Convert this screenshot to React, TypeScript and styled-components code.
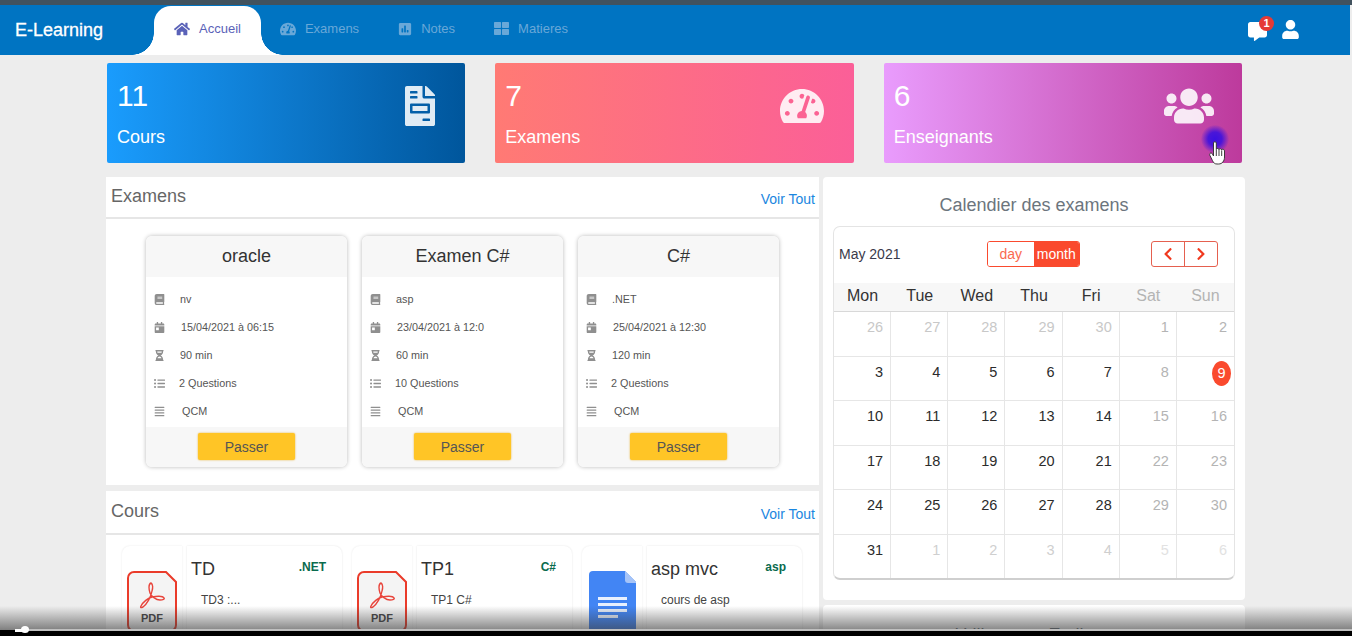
import { createGlobalStyle } from "styled-components";
import styled from "styled-components";
import type { ReactNode } from "react";
import {
  FaAlignJustify,
  FaBook,
  FaCalendarDay,
  FaCommentAlt,
  FaFileInvoice,
  FaHome,
  FaHourglassHalf,
  FaListUl,
  FaPoll,
  FaTachometerAlt,
  FaThLarge,
  FaUser,
  FaUsers,
  FaChevronLeft,
  FaChevronRight,
} from "react-icons/fa";

const exams = [
  { title: "oracle", subject: "nv", date: "15/04/2021 à 06:15", time: "90 min", questions: "2 Questions" },
  { title: "Examen C#", subject: "asp", date: "23/04/2021 à 12:0", time: "60 min", questions: "10 Questions" },
  { title: "C#", subject: ".NET", date: "25/04/2021 à 12:30", time: "120 min", questions: "2 Questions" },
];

const courses = [
  { title: "TD", tag: ".NET", text: "TD3 :...", kind: "pdf" },
  { title: "TP1", tag: "C#", text: "TP1 C#", kind: "pdf" },
  { title: "asp mvc", tag: "asp", text: "cours de asp", kind: "doc" },
];

const weekDays = ["Mon", "Tue", "Wed", "Thu", "Fri", "Sat", "Sun"];

const weeks = [
  [26, 27, 28, 29, 30, 1, 2],
  [3, 4, 5, 6, 7, 8, 9],
  [10, 11, 12, 13, 14, 15, 16],
  [17, 18, 19, 20, 21, 22, 23],
  [24, 25, 26, 27, 28, 29, 30],
  [31, 1, 2, 3, 4, 5, 6],
];

const dayTone = (week: number, col: number) => {
  if (week === 0 && col < 5) return "#c8c8c8";
  if (week === 5 && col > 0) return col > 4 ? "#e2e2e2" : "#cfcfcf";
  if (col > 4) return "#b4b4b4";
  return "#2b2b2b";
};

const PdfIcon = () => (
  <svg width="50" height="62" viewBox="0 0 50 62">
    <path
      d="M7 1H39L49 11V54a6 6 0 0 1-6 6H7a6 6 0 0 1-6-6V7a6 6 0 0 1 6-6Z"
      fill="#f4f4f4"
      stroke="#ea3b2a"
      strokeWidth="2"
    />
    <path
      d="M24 12c-3 1-2 7-1 10 1 3 6 7 10 7 3 0 5-1 4-2-1-2-7-2-12-1-4 1-9 5-11 9-1 2 0 2 2 1 4-3 8-10 9-16 1-3 1-7-1-8Z"
      fill="none"
      stroke="#e8453c"
      strokeWidth="1.400"
    />
    <text x="25" y="51" textAnchor="middle" fontFamily="Liberation Sans, sans-serif" fontSize="11" fontWeight="700" fill="#444">
      PDF
    </text>
  </svg>
);

const DocIcon = () => (
  <svg width="47" height="64" viewBox="0 0 47 64">
    <path d="M4 0H36L47 11V60a4 4 0 0 1-4 4H4a4 4 0 0 1-4-4V4a4 4 0 0 1 4-4Z" fill="#4285f4" />
    <path d="M36 0L47 11V12H39a3 3 0 0 1-3-3Z" fill="#a6c4f8" />
    <path d="M9 26h29v3H9ZM9 32h29v3H9ZM9 38h29v3H9ZM9 44h20v3H9Z" fill="#e8f0fe" />
  </svg>
);

const Hand = () => (
  <svg width="18" height="24" viewBox="0 0 18 24">
    <path
      d="M4.500 2c0-1.700 2.800-1.700 2.800 0v6.500c0-1.400 2.700-1.400 2.700 0.200 0-1.400 2.600-1.300 2.600 0.400 0-1.300 2.900-1.100 2.900 0.800V16c0 4-2.300 7-5.800 7H8c-2.200 0-3.400-1-4.500-3.300L.8 14.200c-.8-2 1.600-3 2.600-1.300L4.500 15Z"
      fill="#fff"
      stroke="#2a2a2a"
      strokeWidth="0.900"
    />
    <path d="M7.300 9v6M10 9v6M12.700 9.500V15" stroke="#2a2a2a" strokeWidth="0.900" fill="none" />
  </svg>
);

const App = () => {
  const examRows = (e: (typeof exams)[number]): [ReactNode, string, number][] => [
    [<FaBook />, e.subject, 15],
    [<FaCalendarDay />, e.date, 16],
    [<FaHourglassHalf />, e.time, 15],
    [<FaListUl />, e.questions, 14],
    [<FaAlignJustify />, "QCM", 17],
  ];

  return (
    <Screen>
      <GlobalStyle />
      <TopStrip />
      <Navbar>
        <Brand>E-Learning</Brand>
        <Tabs>
          <Tab $active>
            <FaHome size={16} />
            Accueil
          </Tab>
          <Tab>
            <FaTachometerAlt size={16} />
            Examens
          </Tab>
          <Tab>
            <FaPoll size={14} />
            Notes
          </Tab>
          <Tab>
            <FaThLarge size={15} />
            Matieres
          </Tab>
        </Tabs>
        <NavActions>
          <MessageLink>
            <FaCommentAlt size={19} />
            <Badge>1</Badge>
          </MessageLink>
          <FaUser size={19} />
        </NavActions>
      </Navbar>

      <Stats>
        <StatCard $from="#1a9cfd" $to="#00569c">
          <StatText>
            <StatNumber>11</StatNumber>
            <StatLabel>Cours</StatLabel>
          </StatText>
          <StatIcon $right={25}>
            <FaFileInvoice size={40} />
          </StatIcon>
        </StatCard>
        <StatCard $from="#ff7a74" $to="#fb5f98">
          <StatText>
            <StatNumber>7</StatNumber>
            <StatLabel>Examens</StatLabel>
          </StatText>
          <StatIcon $right={30}>
            <FaTachometerAlt size={44} />
          </StatIcon>
        </StatCard>
        <StatCard $from="#e99cfd" $to="#bd3a9c">
          <StatText>
            <StatNumber>6</StatNumber>
            <StatLabel>Enseignants</StatLabel>
          </StatText>
          <StatIcon $right={28}>
            <FaUsers size={50} />
          </StatIcon>
        </StatCard>
      </Stats>

      <Content>
        <LeftColumn>
          <ExamPanel>
            <PanelHeader $height={42} $top={9}>
              <PanelTitle>Examens</PanelTitle>
              <SeeAll>Voir Tout</SeeAll>
            </PanelHeader>
            <ExamGrid>
              {exams.map((exam) => (
                <ExamCard key={exam.title}>
                  <ExamTitle>{exam.title}</ExamTitle>
                  <ExamBody>
                    {examRows(exam).map(([icon, text, indent], i) => (
                      <ExamRow key={i}>
                        <ExamIcon>{icon}</ExamIcon>
                        <ExamText $indent={indent}>{text}</ExamText>
                      </ExamRow>
                    ))}
                  </ExamBody>
                  <ExamFooter>
                    <PassButton>Passer</PassButton>
                  </ExamFooter>
                </ExamCard>
              ))}
            </ExamGrid>
          </ExamPanel>

          <CoursePanel>
            <PanelHeader $height={44} $top={10}>
              <PanelTitle>Cours</PanelTitle>
              <SeeAll>Voir Tout</SeeAll>
            </PanelHeader>
            <CourseGrid>
              {courses.map((course) => (
                <CourseCard key={course.title}>
                  <CourseThumb $left={course.kind === "pdf" ? 5 : 7}>
                    {course.kind === "pdf" ? <PdfIcon /> : <DocIcon />}
                  </CourseThumb>
                  <CourseInfo>
                    <CourseTop>
                      <CourseTitle>{course.title}</CourseTitle>
                      <CourseTag>{course.tag}</CourseTag>
                    </CourseTop>
                    <CourseText>{course.text}</CourseText>
                  </CourseInfo>
                </CourseCard>
              ))}
            </CourseGrid>
          </CoursePanel>
        </LeftColumn>

        <RightColumn>
          <CalendarPanel>
            <CalendarHeading>Calendier des examens</CalendarHeading>
            <Calendar>
              <CalendarToolbar>
                <MonthLabel>May 2021</MonthLabel>
                <ViewSwitch>
                  <ViewButton>day</ViewButton>
                  <ViewButton $active>month</ViewButton>
                </ViewSwitch>
                <PageSwitch>
                  <PageButton>
                    <FaChevronLeft size={14} />
                  </PageButton>
                  <PageButton>
                    <FaChevronRight size={14} />
                  </PageButton>
                </PageSwitch>
              </CalendarToolbar>
              <WeekHead>
                {weekDays.map((d, i) => (
                  <WeekDay key={d} $weekend={i > 4}>
                    {d}
                  </WeekDay>
                ))}
              </WeekHead>
              <DayGrid>
                {weeks.map((week, w) =>
                  week.map((day, col) => (
                    <DayCell key={`${w}-${col}`} $tone={dayTone(w, col)}>
                      {w === 1 && col === 6 ? <Today>{day}</Today> : day}
                    </DayCell>
                  )),
                )}
              </DayGrid>
            </Calendar>
          </CalendarPanel>
          <OnlinePanel>Utilisateurs En ligne</OnlinePanel>
        </RightColumn>
      </Content>

      <PointerHalo />
      <Pointer>
        <Hand />
      </Pointer>

      <PlayerShade />
      <PlayerBar>
        <PlayerTrack />
        <PlayerPlayed />
        <PlayerKnob />
      </PlayerBar>
    </Screen>
  );
};

const GlobalStyle = createGlobalStyle`
  html, body {
    margin: 0;
    padding: 0;
    background: #ededed;
  }
  * {
    box-sizing: border-box;
  }
`;

const Screen = styled.div`
  position: relative;
  width: 1352px;
  height: 636px;
  overflow: hidden;
  background: #ededed;
  font-family: "Liberation Sans", Arial, sans-serif;
`;

const TopStrip = styled.div`
  height: 5px;
  background: #41525e;
`;

const Navbar = styled.nav`
  width: 1350px;
  height: 50px;
  padding-top: 1px;
  display: flex;
  align-items: stretch;
  background: #0074c2;
`;

const Brand = styled.div`
  width: 154px;
  padding: 14px 0 0 15px;
  color: #fff;
  font-size: 18px;
  line-height: 20px;
  -webkit-text-stroke: 0.3px #fff;
`;

const Tabs = styled.div`
  display: flex;
`;

const Tab = styled.div<{ $active?: boolean }>`
  position: relative;
  display: flex;
  align-items: center;
  gap: 9px;
  padding: 0 20px 4px ${(p) => (p.$active ? 20 : 19)}px;
  font-size: 13px;
  color: ${(p) => (p.$active ? "#5a62b8" : "#69a8d8")};
  background: ${(p) => (p.$active ? "#fff" : "transparent")};
  border-radius: 17px 17px 0 0;

  &::before,
  &::after {
    content: "";
    display: ${(p) => (p.$active ? "block" : "none")};
    position: absolute;
    bottom: 0;
    width: 22px;
    height: 22px;
  }
  &::before {
    left: -22px;
    background: radial-gradient(circle at 0 0, transparent 21.5px, #fff 22px);
  }
  &::after {
    right: -22px;
    background: radial-gradient(circle at 100% 0, transparent 21.5px, #fff 22px);
  }
`;

const NavActions = styled.div`
  margin-left: auto;
  padding: 14px 50px 0 0;
  display: flex;
  gap: 14px;
  color: #fff;
`;

const MessageLink = styled.div`
  position: relative;
  width: 19px;
  height: 20px;
  padding-top: 2px;
`;

const Badge = styled.span`
  position: absolute;
  top: -4px;
  left: 11px;
  width: 15px;
  height: 15px;
  border-radius: 50%;
  background: #e53935;
  color: #fff;
  font-size: 11px;
  font-weight: 700;
  line-height: 15px;
  text-align: center;
`;

const Stats = styled.section`
  width: 1135px;
  margin: 8px 0 0 107px;
  display: grid;
  grid-template-columns: repeat(3, 1fr);
  gap: 30px;
`;

const StatCard = styled.div<{ $from: string; $to: string }>`
  height: 100px;
  padding: 0 0 0 10px;
  display: flex;
  justify-content: space-between;
  border-radius: 2px;
  color: #fff;
  background: linear-gradient(90deg, ${(p) => p.$from}, ${(p) => p.$to});
`;

const StatText = styled.div`
  display: flex;
  flex-direction: column;
`;

const StatNumber = styled.div`
  margin-top: 15px;
  font-size: 30px;
  line-height: 36px;
`;

const StatLabel = styled.div`
  margin-top: 13px;
  font-size: 18px;
  line-height: 20px;
`;

const StatIcon = styled.div<{ $right: number }>`
  display: flex;
  align-items: center;
  height: 86px;
  padding-right: ${(p) => p.$right}px;
  color: rgba(255, 255, 255, 0.88);
`;

const Content = styled.main`
  margin: 14px 0 0 106px;
  display: flex;
  gap: 4px;
`;

const LeftColumn = styled.div`
  width: 713px;
  display: flex;
  flex-direction: column;
  gap: 6px;
`;

const RightColumn = styled.div`
  width: 422px;
  display: flex;
  flex-direction: column;
  gap: 5px;
`;

const ExamPanel = styled.section`
  height: 308px;
  background: #fff;
`;

const CoursePanel = styled.section`
  height: 160px;
  background: #fff;
`;

const PanelHeader = styled.header<{ $height: number; $top: number }>`
  height: ${(p) => p.$height}px;
  padding: ${(p) => p.$top}px 4px 0 5px;
  display: flex;
  justify-content: space-between;
  align-items: flex-start;
  border-bottom: 2px solid #e6e6e6;
`;

const PanelTitle = styled.h2`
  margin: 0;
  font-size: 18px;
  font-weight: 400;
  line-height: 20px;
  color: #666;
`;

const SeeAll = styled.a`
  margin-top: 5px;
  font-size: 14px;
  line-height: 16px;
  color: #1a86e0;
`;

const ExamGrid = styled.div`
  padding-top: 17px;
  display: flex;
  justify-content: center;
  gap: 15px;
`;

const ExamCard = styled.article`
  width: 201px;
  height: 231px;
  border-radius: 6px;
  overflow: hidden;
  display: flex;
  flex-direction: column;
  background: #fff;
  box-shadow: 0 0 4px rgba(0, 0, 0, 0.28);
`;

const ExamTitle = styled.h3`
  margin: 0;
  height: 41px;
  background: #f7f7f7;
  font-size: 18px;
  font-weight: 400;
  line-height: 40px;
  text-align: center;
  color: #333;
`;

const ExamBody = styled.div`
  flex: 1;
  padding: 8px 0 0 8px;
`;

const ExamRow = styled.div`
  height: 28px;
  display: flex;
  align-items: center;
`;

const ExamIcon = styled.span`
  width: 11px;
  display: flex;
  justify-content: center;
  color: #8f8f8f;
  font-size: 11px;
`;

const ExamText = styled.span<{ $indent: number }>`
  margin-left: ${(p) => p.$indent}px;
  font-size: 10.800px;
  color: #555;
`;

const ExamFooter = styled.div`
  height: 40px;
  padding-top: 6px;
  display: flex;
  justify-content: center;
  background: #f7f7f7;
`;

const PassButton = styled.button`
  width: 97px;
  height: 27px;
  border: 0;
  border-radius: 2px;
  background: #ffc526;
  box-shadow: 0 0 2px rgba(230, 160, 0, 0.8);
  font-family: inherit;
  font-size: 14px;
  color: #555;
`;

const CourseGrid = styled.div`
  padding: 11px 0 0 16px;
  display: flex;
  gap: 10px;
`;

const CourseCard = styled.article`
  width: 220px;
  height: 105px;
  display: flex;
  gap: 5px;
`;

const CourseThumb = styled.div<{ $left: number }>`
  width: 60px;
  padding: 25px 0 0 ${(p) => p.$left}px;
  border-radius: 8px 0 0 0;
  background: #fff;
  box-shadow: 0 0 2px rgba(0, 0, 0, 0.1);
`;

const CourseInfo = styled.div`
  width: 155px;
  padding: 12px 16px 0 4px;
  border-radius: 0 8px 0 0;
  background: #fff;
  box-shadow: 0 0 2px rgba(0, 0, 0, 0.12);
`;

const CourseTop = styled.div`
  display: flex;
  justify-content: space-between;
  align-items: flex-start;
`;

const CourseTitle = styled.div`
  font-size: 18px;
  line-height: 22px;
  color: #333;
`;

const CourseTag = styled.div`
  font-size: 12px;
  font-weight: 700;
  line-height: 18px;
  color: #0a6b4e;
`;

const CourseText = styled.div`
  margin: 12px 0 0 10px;
  font-size: 12px;
  line-height: 16px;
  color: #444;
`;

const CalendarPanel = styled.section`
  height: 423px;
  padding: 0 10px;
  border-radius: 4px;
  background: #fff;
`;

const CalendarHeading = styled.h2`
  margin: 0;
  height: 49px;
  font-size: 18px;
  font-weight: 400;
  line-height: 56px;
  text-align: center;
  color: #6c757d;
`;

const Calendar = styled.div`
  height: 354px;
  border: 1px solid #e4e4e4;
  border-bottom: 2px solid #cfcfcf;
  border-radius: 7px;
  overflow: hidden;
`;

const CalendarToolbar = styled.div`
  height: 56px;
  padding: 14px 0 0 5px;
  display: flex;
  align-items: flex-start;
`;

const MonthLabel = styled.div`
  width: 148px;
  font-size: 14px;
  line-height: 26px;
  color: #3a3a4a;
`;

const ViewSwitch = styled.div`
  width: 93px;
  height: 26px;
  display: flex;
  border: 1px solid #fa4a2e;
  border-radius: 3px;
  overflow: hidden;
`;

const ViewButton = styled.div<{ $active?: boolean }>`
  flex: 1;
  text-align: center;
  font-size: 14px;
  line-height: 24px;
  color: ${(p) => (p.$active ? "#fff" : "#fa6a50")};
  background: ${(p) => (p.$active ? "#fa4a2e" : "#fff")};
`;

const PageSwitch = styled.div`
  width: 67px;
  height: 26px;
  margin-left: 71px;
  display: flex;
  border: 1px solid #e5604f;
  border-radius: 3px;
`;

const PageButton = styled.div`
  flex: 1;
  display: flex;
  align-items: center;
  justify-content: center;
  color: #f0391f;

  & + & {
    border-left: 1px solid #e5604f;
  }
`;

const WeekHead = styled.div`
  height: 29px;
  display: grid;
  grid-template-columns: repeat(7, 1fr);
  background: #f7f7f7;
  border-bottom: 1px solid #d8d8d8;
`;

const WeekDay = styled.div<{ $weekend: boolean }>`
  font-size: 16px;
  line-height: 26px;
  text-align: center;
  color: ${(p) => (p.$weekend ? "#b4b4b4" : "#333")};
`;

const DayGrid = styled.div`
  display: grid;
  grid-template-columns: repeat(7, 1fr);
  grid-auto-rows: 44.500px;
`;

const DayCell = styled.div<{ $tone: string }>`
  padding: 7px 7px 0 0;
  border-right: 1px solid #e6e6e6;
  border-bottom: 1px solid #e6e6e6;
  font-size: 14.500px;
  line-height: 16px;
  text-align: right;
  color: ${(p) => p.$tone};

  &:nth-child(7n) {
    border-right: 0;
  }
  &:nth-last-child(-n + 7) {
    border-bottom: 0;
  }
`;

const Today = styled.span`
  display: inline-block;
  width: 19px;
  height: 25px;
  margin: -3px -4px 0 0;
  border-radius: 50%;
  background: #fa4a2e;
  color: #fff;
  line-height: 25px;
  text-align: center;
`;

const OnlinePanel = styled.section`
  height: 60px;
  padding-top: 20px;
  border-radius: 4px;
  background: #fff;
  font-size: 18px;
  line-height: 20px;
  text-align: center;
  color: #6c757d;
`;

const PointerHalo = styled.div`
  position: absolute;
  left: 1201px;
  top: 125px;
  width: 28px;
  height: 28px;
  border-radius: 50%;
  background: radial-gradient(circle, #3a10e0 0%, #4a16d8 35%, rgba(90, 30, 200, 0) 72%);
`;

const Pointer = styled.div`
  position: absolute;
  left: 1209px;
  top: 141px;
  line-height: 0;
`;

const PlayerShade = styled.div`
  position: absolute;
  left: 0;
  right: 0;
  bottom: 6px;
  height: 24px;
  background: linear-gradient(180deg, rgba(60, 60, 60, 0), rgba(60, 60, 60, 0.62));
`;

const PlayerBar = styled.div`
  position: absolute;
  left: 0;
  right: 0;
  bottom: 0;
  height: 6px;
  background: #000;
`;

const PlayerTrack = styled.div`
  position: absolute;
  left: 24px;
  right: 0;
  top: -1px;
  height: 2px;
  background: #c0c0c0;
`;

const PlayerPlayed = styled.div`
  position: absolute;
  left: 15px;
  top: -1px;
  width: 9px;
  height: 3px;
  background: #fff;
`;

const PlayerKnob = styled.div`
  position: absolute;
  left: 21px;
  top: -4px;
  width: 8px;
  height: 7px;
  border-radius: 50%;
  background: #fff;
`;

export default App;
